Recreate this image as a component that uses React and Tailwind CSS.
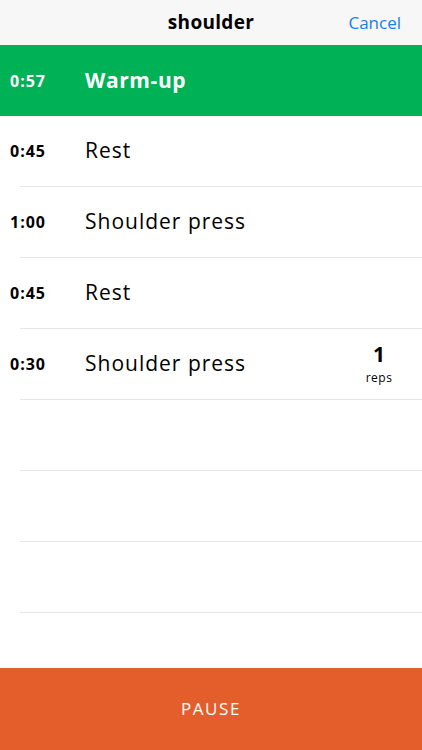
import React from "react";

const rows = [
  { t: "0:45", name: "Rest" },
  { t: "1:00", name: "Shoulder press" },
  { t: "0:45", name: "Rest" },
  { t: "0:30", name: "Shoulder press", reps: "1" },
  {},
  {},
  {},
];

export default function App() {
  return (
    <div className="w-[422px] h-[750px] flex flex-col bg-white overflow-hidden" style={{ fontFamily: "'Open Sans', Lato, sans-serif" }}>
      <div className="h-[45px] bg-[#f7f7f7] relative flex items-center justify-center shrink-0">
        <span className="text-[19px] font-bold text-black tracking-[0.3px]">shoulder</span>
        <span className="absolute right-[21px] top-[10px] text-[17px] text-[#1a7ee6]">Cancel</span>
      </div>
      <div className="h-[71px] bg-[#00b156] flex items-center shrink-0 text-white">
        <span className="w-[85px] pl-[10px] text-[16px] font-bold tracking-[1px]">0:57</span>
        <span className="text-[21px] font-bold tracking-[0.6px]">Warm-up</span>
      </div>
      <div className="flex-1 flex flex-col">
        {rows.map((r, i) => (
          <div key={i} className="h-[71px] shrink-0 flex flex-col">
            <div className="flex-1 flex items-center">
              {r.t && (
                <>
                  <span className="w-[85px] pl-[10px] text-[16px] font-bold text-black tracking-[1px]">{r.t}</span>
                  <span className="flex-1 text-[21px] text-black tracking-[1px]">{r.name}</span>
                  {r.reps && (
                    <div className="w-[60px] mr-[13px] flex flex-col items-center leading-none">
                      <span className="text-[21px] font-bold text-black">{r.reps}</span>
                      <span className="text-[12px] text-black mt-[7px] tracking-[0.5px]">reps</span>
                    </div>
                  )}
                </>
              )}
            </div>
            <div className="ml-[20px] h-px bg-[#e6e6e6]" />
          </div>
        ))}
      </div>
      <div className="h-[82px] bg-[#e35e2a] flex items-center justify-center shrink-0">
        <span className="text-white text-[17px] tracking-[1.6px]">PAUSE</span>
      </div>
    </div>
  );
}
